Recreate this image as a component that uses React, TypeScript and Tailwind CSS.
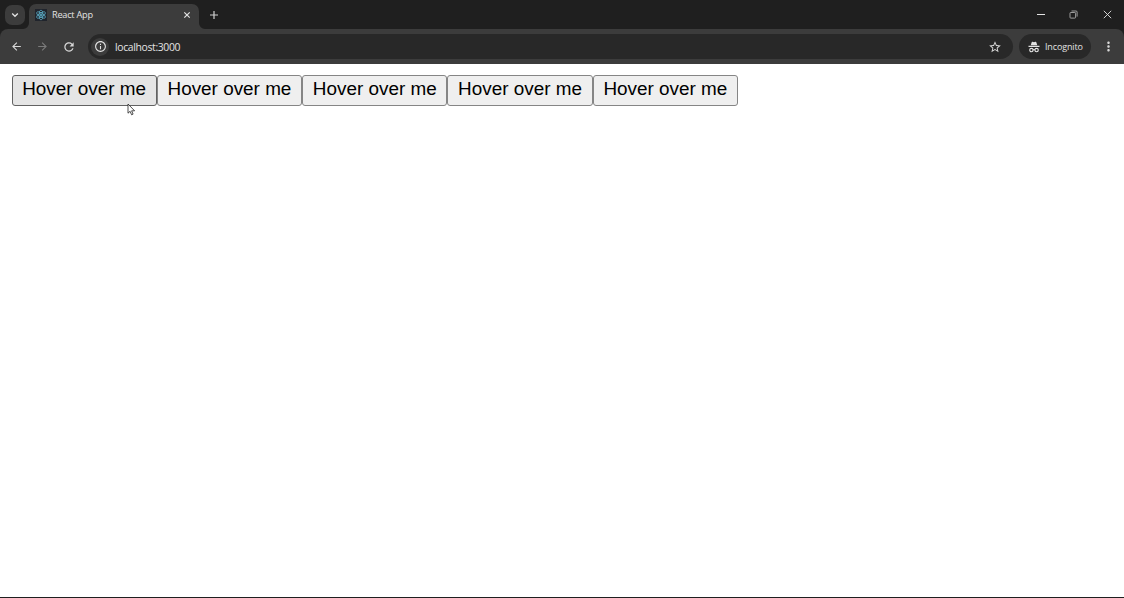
import { MdArrowBack, MdArrowForward, MdRefresh, MdStarBorder, MdInfoOutline, MdMoreVert } from 'react-icons/md';

const buttons = [1, 2, 3, 4, 5];

function ReactLogo() {
  return (
    <svg className="w-3 h-3" viewBox="0 0 24 24" fill="none" stroke="#5fb5cf" strokeWidth="1.4">
      <rect width="24" height="24" fill="#20242c" stroke="none" />
      <ellipse cx="12" cy="12" rx="4" ry="10" />
      <ellipse cx="12" cy="12" rx="4" ry="10" transform="rotate(60 12 12)" />
      <ellipse cx="12" cy="12" rx="4" ry="10" transform="rotate(120 12 12)" />
      <circle cx="12" cy="12" r="1.6" fill="#5fb5cf" />
    </svg>
  );
}

function IncognitoIcon() {
  return (
    <svg className="w-3 h-3" viewBox="0 0 24 24" fill="none">
      <path d="M5.5 8.5 7.2 2.8Q7.6 1.2 9.2 1.6L12 2.3 14.8 1.6Q16.4 1.2 16.8 2.8L18.5 8.5Z" fill="#e3e3e3" />
      <path d="M1 9.5H23V12H1Z" fill="#e3e3e3" />
      <circle cx="6.8" cy="18.2" r="3.4" stroke="#e3e3e3" strokeWidth="2.2" />
      <circle cx="17.2" cy="18.2" r="3.4" stroke="#e3e3e3" strokeWidth="2.2" />
      <path d="M10 17.8Q12 16.4 14 17.8" stroke="#e3e3e3" strokeWidth="2" />
    </svg>
  );
}

function TabStrip() {
  return (
    <div className="flex h-[29px] bg-[#1f1f1f] pl-[5px]">
      <div className="mt-[5px] flex h-5 w-5 items-center justify-center rounded-[7px] bg-[#3c3c3c]">
        <svg className="w-2 h-2" viewBox="0 0 8 8" fill="none" stroke="#e3e3e3" strokeWidth="1.3">
          <path d="M1.2 2.5 4 5.3 6.8 2.5" />
        </svg>
      </div>
      <div className="relative ml-1 mt-1 flex h-[25px] w-[170px] items-center rounded-t-[7px] bg-[#3c3c3c] pb-[3px] pl-1.5">
        {/* flared feet of the active tab */}
        <svg className="absolute -left-1.5 bottom-0 w-1.5 h-1.5" viewBox="0 0 6 6" fill="#3c3c3c">
          <path d="M6 0V6H0A6 6 0 0 0 6 0Z" />
        </svg>
        <svg className="absolute -right-1.5 bottom-0 w-1.5 h-1.5" viewBox="0 0 6 6" fill="#3c3c3c">
          <path d="M0 0V6H6A6 6 0 0 1 0 0Z" />
        </svg>
        <ReactLogo />
        <span className="ml-[5px] text-[9.2px] leading-3 tracking-[-0.25px] text-[#e3e3e3]">React App</span>
        <svg className="ml-auto mr-2 w-2 h-2" viewBox="0 0 8 8" stroke="#e3e3e3" strokeWidth="1.2">
          <path d="M1.3 1.3 6.7 6.7M6.7 1.3 1.3 6.7" />
        </svg>
      </div>
      <svg className="ml-2.5 mt-2.5 w-[10px] h-[10px]" viewBox="0 0 10 10" stroke="#d0d0d0" strokeWidth="1.2">
        <path d="M5 1V9M1 5H9" />
      </svg>
      <div className="ml-auto flex h-[29px] items-center pr-3">
        <svg className="w-2 h-2" viewBox="0 0 8 8" stroke="#e3e3e3" strokeWidth="1">
          <path d="M0 3.5H8" />
        </svg>
        <svg className="ml-6 w-[9px] h-[9px]" viewBox="0 0 9 9" fill="none" stroke="#bdbdbd" strokeWidth="0.8">
          <rect x="1" y="2.5" width="5.6" height="5.6" rx="0.8" />
          <path d="M2.5 1H7Q8.1 1 8.1 2V6.6" />
        </svg>
        <svg className="ml-[25px] w-[9px] h-[9px]" viewBox="0 0 9 9" stroke="#e3e3e3" strokeWidth="0.9">
          <path d="M0.8 0.8 8.2 8.2M8.2 0.8 0.8 8.2" />
        </svg>
      </div>
    </div>
  );
}

function Toolbar() {
  return (
    <div className="bg-[#1f1f1f]">
      <div className="flex h-[35px] items-center rounded-t-lg bg-[#3c3c3c] px-2.5">
        <MdArrowBack className="h-[13px] w-[13px] text-[#d8d8d8]" />
        <MdArrowForward className="ml-[13px] h-[13px] w-[13px] text-[#7b7b7b]" />
        <MdRefresh className="ml-[13px] h-[14px] w-[14px] text-[#d8d8d8]" />
        <div className="ml-3 flex h-[25px] w-[925px] items-center rounded-full bg-[#282828] pl-[3px] pr-[11px]">
          <div className="flex h-[18px] w-[18px] items-center justify-center rounded-full bg-[#3c3c3c]">
            <MdInfoOutline className="h-[13px] w-[13px] text-[#e3e3e3]" />
          </div>
          <span className="ml-1.5 text-[10.4px] leading-3 tracking-[-0.35px] text-[#e3e3e3]">localhost:3000</span>
          <MdStarBorder className="ml-auto h-[14px] w-[14px] text-[#d8d8d8]" />
        </div>
        <div className="ml-1.5 flex h-[25px] w-[72px] items-center rounded-full bg-[#282828] pl-[9px]">
          <IncognitoIcon />
          <span className="ml-[5px] text-[9px] leading-3 tracking-[-0.15px] text-[#e3e3e3]">Incognito</span>
        </div>
        <MdMoreVert className="ml-auto h-[15px] w-[15px] -mr-[2px] shrink-0 text-[#d8d8d8]" />
      </div>
    </div>
  );
}

export default function App() {
  return (
    <div className="relative flex h-[598px] w-[1124px] flex-col overflow-hidden border-b border-[#1f1f1f] bg-white font-['Open_Sans','Noto_Sans',sans-serif]">
      <TabStrip />
      <Toolbar />
      <div className="flex pl-[11.5px] pt-[11px]">
        {buttons.map(id => (
          <button
            key={id}
            className="h-[31px] w-[145.3px] whitespace-nowrap rounded-[3px] border border-[#858585] bg-[#efefef] pb-[3px] font-['Liberation_Sans',sans-serif] text-[18.9px] leading-[22px] text-black first:border-[#626262] first:bg-[#e5e5e5]"
          >
            Hover over me
          </button>
        ))}
      </div>
      {/* mouse pointer */}
      <svg className="absolute left-[127px] top-[103px] h-[13px] w-[9px]" viewBox="0 0 9 13" fill="white" stroke="#222" strokeWidth="0.8">
        <path d="M1 1V10.2L3.1 8.3 4.6 11.8 6.1 11.1 4.6 7.8H7.6Z" />
      </svg>
    </div>
  );
}
